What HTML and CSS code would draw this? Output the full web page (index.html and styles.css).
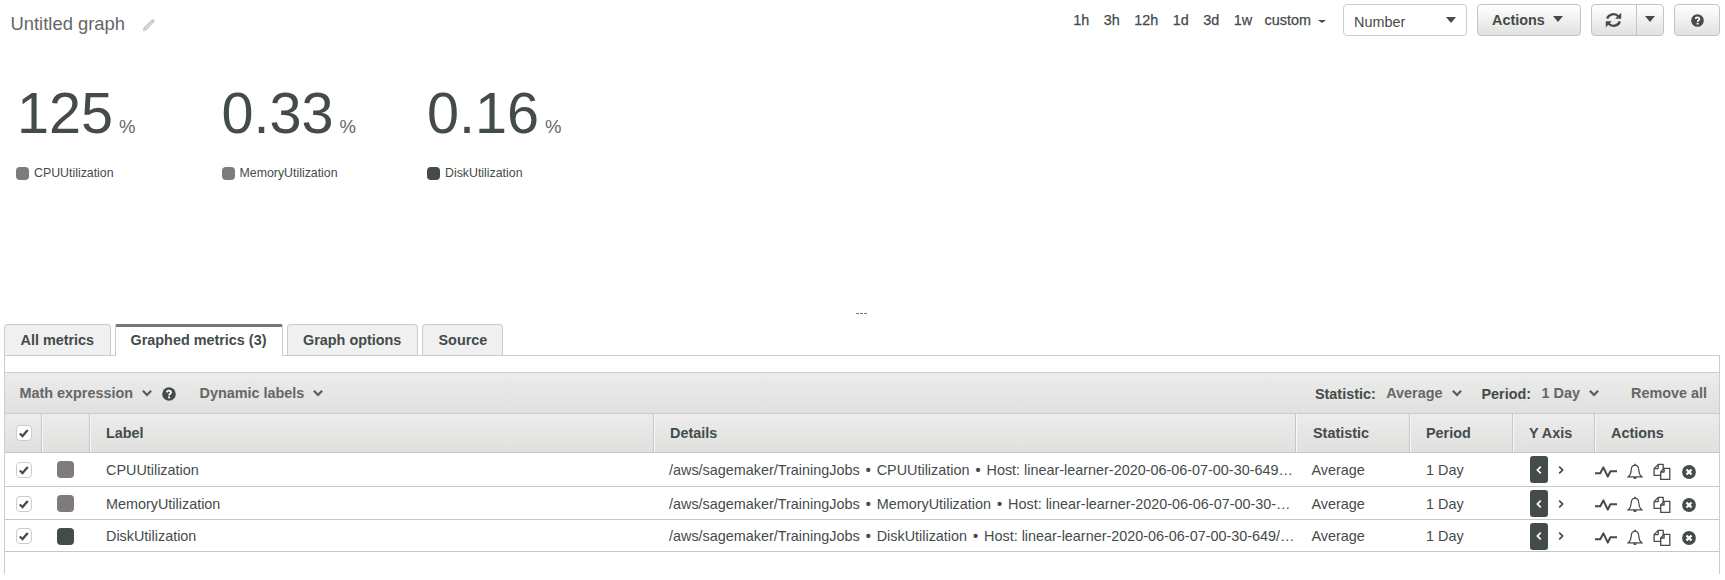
FILE: index.html
```html
<!DOCTYPE html>
<html lang="en">
<head>
<meta charset="utf-8">
<title>Untitled graph</title>
<link rel="stylesheet" href="styles.css">
</head>
<body>
<svg class="defs" aria-hidden="true">
  <symbol id="check" viewBox="0 0 16 16"><path d="M3.2 8.6 6.3 11.5 12.3 4.6" fill="none" stroke="#444b4b" stroke-width="2.6"/></symbol>
  <symbol id="chev" viewBox="0 0 10 8"><path d="M.9 1.8 5 5.9 9.1 1.8" fill="none" stroke="#545b5b" stroke-width="2.1"/></symbol>
  <symbol id="left" viewBox="0 0 6 8"><path d="M4.8.6 1.4 4 4.8 7.4" fill="none" stroke="currentColor" stroke-width="1.7"/></symbol>
  <symbol id="right" viewBox="0 0 6 8"><path d="M1.2.6 4.6 4 1.2 7.4" fill="none" stroke="currentColor" stroke-width="1.7"/></symbol>
  <symbol id="help" viewBox="0 0 14 14"><circle cx="7" cy="7" r="6.8" fill="#444b4b"/><path d="M4.9 5.4C5 3.1 9.2 3.2 9.1 5.5 9 6.8 7.1 6.8 7.1 8.4" fill="none" stroke="#fff" stroke-width="1.8"/><path d="M6.1 9.5h2v1.8h-2z" fill="#fff"/></symbol>
  <symbol id="pulse" viewBox="0 0 22 14"><path d="M0 8.3h5.2L8.4 2.4l4.4 9.2 2.6-5.3H22" fill="none" stroke="#444b4b" stroke-width="2" stroke-linejoin="round"/></symbol>
  <symbol id="bell" viewBox="0 0 16 18"><path d="M8 2.2C5.3 2.4 4.3 4.4 4.2 7c-.1 3.400-.9 5.200-2.900 6.800h13.400C12.700 12.200 11.900 10.400 11.800 7 11.700 4.400 10.700 2.400 8 2.200z" fill="none" stroke="#444b4b" stroke-width="1.200"/><path d="M7.300.8h1.400v1.500H7.300zM6 14.200h4c-.2 2.400-3.800 2.400-4 0z" fill="#444b4b"/></symbol>
  <symbol id="copy" viewBox="0 0 18 18"><g fill="#fff" stroke="#444b4b" stroke-width="1.300" stroke-linejoin="round"><path d="M5.200 1.400h5v11H1.100V5.600zM5.200 1.400v4.200H1.100"/><path d="M11.100 5.400h5.700v11H7.700V9zM11.100 5.400V9H7.700"/></g></symbol>
  <symbol id="close" viewBox="0 0 14 14"><circle cx="7" cy="7" r="6.900" fill="#444b4b"/><path d="m4.500 4.500 5 5m0-5-5 5" stroke="#fff" stroke-width="2.300"/></symbol>
</svg>

<header class="topbar">
  <h1 class="title">Untitled graph</h1>
  <svg class="pencil" viewBox="0 0 14 14"><path d="M.8 13.200 1.700 9.600 9.800 1.500q1.200-1 2.300.2 1.100 1.200.1 2.300L4.200 12.200z" fill="#c9c9c9"/><path d="m3.300 10.700 6.700-6.700" stroke="#e8e8e8"/></svg>
  <nav class="ranges"><a>1h</a><a>3h</a><a>12h</a><a>1d</a><a>3d</a><a>1w</a><a>custom</a><i class="caret small"></i></nav>
  <div class="select">Number<i class="caret"></i></div>
  <div class="btn actions">Actions<i class="caret"></i></div>
  <div class="btn split"><span class="refresh"><svg viewBox="0 0 16 16"><g fill="none" stroke="#444b4b" stroke-width="2.300"><path d="M1.700 6.600A6.400 5.800 0 0 1 13 4.400"/><path d="M14.300 9.400A6.400 5.800 0 0 1 3 11.600"/></g><path d="M15.700.8v6h-6zM.3 15.200v-6h6z" fill="#444b4b"/></svg></span><span class="more"><i class="caret"></i></span></div>
  <div class="btn helpbtn"><svg><use href="#help"/></svg></div>
</header>

<section class="numbers">
  <div class="number"><p class="value">125<small>%</small></p><p class="legend"><i class="dot"></i>CPUUtilization</p></div>
  <div class="number"><p class="value">0.33<small>%</small></p><p class="legend"><i class="dot"></i>MemoryUtilization</p></div>
  <div class="number"><p class="value">0.16<small>%</small></p><p class="legend"><i class="dot dark"></i>DiskUtilization</p></div>
</section>

<div class="handle"><i></i><i></i><i></i></div>

<nav class="tabs"><a class="tab all">All metrics</a><a class="tab active">Graphed metrics (3)</a><a class="tab opts">Graph options</a><a class="tab source">Source</a></nav>

<main class="panel">
  <div class="toolbar">
    <span class="math">Math expression</span><svg class="chev"><use href="#chev"/></svg><svg class="qmark"><use href="#help"/></svg>
    <span class="dynamic">Dynamic labels</span><svg class="chev"><use href="#chev"/></svg>
    <b class="stat">Statistic:</b><span class="pick">Average</span><svg class="chev raised"><use href="#chev"/></svg>
    <b class="period">Period:</b><span class="pick">1 Day</span><svg class="chev raised"><use href="#chev"/></svg>
    <span class="remove">Remove all</span>
  </div>
  <div class="row head">
    <div class="cell pickcell"><span class="box"><svg><use href="#check"/></svg></span></div><div class="cell"></div><div class="cell text">Label</div><div class="cell text">Details</div><div class="cell text stathead">Statistic</div><div class="cell text">Period</div><div class="cell text">Y Axis</div><div class="cell text">Actions</div>
  </div>
  <div class="row first">
    <div class="cell pickcell"><span class="box"><svg><use href="#check"/></svg></span></div><div class="cell color"><i class="swatch"></i></div><div class="cell text">CPUUtilization</div><div class="cell detail">/aws/sagemaker/TrainingJobs <b>•</b> CPUUtilization <b>•</b> Host: linear-learner-2020-06-06-07-00-30-649…</div><div class="cell avg">Average</div><div class="cell day">1 Day</div><div class="cell axis"><span class="on"><svg><use href="#left"/></svg></span><svg><use href="#right"/></svg></div><div class="cell icons"><svg class="pulse"><use href="#pulse"/></svg><svg class="bell"><use href="#bell"/></svg><svg class="copy"><use href="#copy"/></svg><svg class="close"><use href="#close"/></svg></div>
  </div>
  <div class="row second">
    <div class="cell pickcell"><span class="box"><svg><use href="#check"/></svg></span></div><div class="cell color"><i class="swatch"></i></div><div class="cell text">MemoryUtilization</div><div class="cell detail">/aws/sagemaker/TrainingJobs <b>•</b> MemoryUtilization <b>•</b> Host: linear-learner-2020-06-06-07-00-30-…</div><div class="cell avg">Average</div><div class="cell day">1 Day</div><div class="cell axis"><span class="on"><svg><use href="#left"/></svg></span><svg><use href="#right"/></svg></div><div class="cell icons"><svg class="pulse"><use href="#pulse"/></svg><svg class="bell"><use href="#bell"/></svg><svg class="copy"><use href="#copy"/></svg><svg class="close"><use href="#close"/></svg></div>
  </div>
  <div class="row third">
    <div class="cell pickcell"><span class="box"><svg><use href="#check"/></svg></span></div><div class="cell color"><i class="swatch dark"></i></div><div class="cell text">DiskUtilization</div><div class="cell detail">/aws/sagemaker/TrainingJobs <b>•</b> DiskUtilization <b>•</b> Host: linear-learner-2020-06-06-07-00-30-649/…</div><div class="cell avg">Average</div><div class="cell day">1 Day</div><div class="cell axis"><span class="on"><svg><use href="#left"/></svg></span><svg><use href="#right"/></svg></div><div class="cell icons"><svg class="pulse"><use href="#pulse"/></svg><svg class="bell"><use href="#bell"/></svg><svg class="copy"><use href="#copy"/></svg><svg class="close"><use href="#close"/></svg></div>
  </div>
</main>
</body>
</html>
```
FILE: styles.css
```css
* { box-sizing: border-box; }
body { margin: 0; height: 580px; overflow: hidden; background: #fff; color: #444b4b; font: 14.4px/20px "Liberation Sans", Arial, sans-serif; }
svg { display: block; flex: none; }
.defs { display: none; }
p, h1 { margin: 0; }

.topbar { display: flex; height: 80px; padding: 4px 5px 0 10.5px; align-items: flex-start; }
.title { margin-top: 9px; font-size: 18.4px; line-height: 22px; font-weight: 400; color: #666; width: 115px; white-space: nowrap; }
.pencil { width: 14px; height: 14px; margin: 14px 0 0 16.5px; }
.ranges { display: flex; margin: 6px 17px 0 auto; gap: 14.5px; align-items: center; -webkit-text-stroke: .25px #444b4b; }
.ranges a:nth-child(6) { margin-right: -2px; }
.caret { display: block; border: 5px solid transparent; border-top: 6px solid #444b4b; border-bottom: 0; }
.caret.small { border-width: 3.5px 4px 0; margin: 2px 0 0 -7.5px; }
.select { display: flex; align-items: center; justify-content: space-between; width: 124px; height: 32px; padding: 3px 10px 0 10px; border: 1.5px solid #ccc; border-radius: 4px; }
.select .caret { margin-top: -3px; }
.btn { display: flex; align-items: center; height: 32px; margin-left: 10px; border: 1.5px solid #c4c4c4; border-radius: 4px; background: linear-gradient(#fff, #e1e1df); font-weight: 700; }
.actions { width: 104px; padding: 0 17px 0 14px; justify-content: space-between; }
.actions .caret { border-width: 6px 5px 0; margin-top: -2px; }
.split { width: 73px; }
.refresh { display: flex; width: 45px; height: 30px; align-items: center; justify-content: center; border-right: 1px solid #c4c4c4; }
.refresh svg { width: 17px; height: 16px; margin-left: -1px; }
.more { display: flex; flex: 1; justify-content: center; }
.more .caret { border-width: 6px 5px 0; margin-top: -2px; }
.helpbtn { width: 46px; justify-content: center; }
.helpbtn svg { width: 13px; height: 13px; }
.helpbtn use, .qmark use { width: 100%; height: 100%; }

.numbers { display: flex; height: 229px; padding-left: 16px; }
.number { width: 205.500px; }
.value { height: 64px; padding-left: 1px; font-size: 57.600px; line-height: 66px; white-space: nowrap; }
.number .value small { margin-left: 6px; font-size: 18.500px; color: #666; }
.number + .number .value { padding-left: 0; }
.legend { display: flex; align-items: center; margin-top: 19px; font-size: 12.350px; }
.dot { width: 13px; height: 13px; margin-right: 5px; border-radius: 4px; background: #7f7a7b; }
.dark.dot, .dark.swatch { background: #444b4b; }

.handle { display: flex; gap: 1px; height: 15px; padding: 4px 0 0 856px; }
.handle i { width: 3px; height: 1px; background: #777; }

.tabs { display: flex; height: 32px; margin: 0 5px 0 4px; gap: 4px; border-bottom: 1px solid #ccc; }
.tab { height: 31px; padding: 5px 0 0 15.5px; border: 1px solid #ccc; border-bottom: 0; border-radius: 4px 4px 0 0; background: #f0f0f0; font-weight: 700; }
.all { width: 107px; }
.active { position: relative; width: 168px; height: 32px; padding-top: 3px; padding-left: 14.5px; border-top: 3px solid #777; border-radius: 2px 2px 0 0; background: #fff; }
.opts { width: 131px; padding-left: 15px; }
.source { width: 81px; }

.panel { width: 1716px; height: 218px; margin-left: 4px; padding-top: 16px; border: solid #ccc; border-width: 0 1px; }
.toolbar { display: flex; align-items: center; height: 41px; padding: 0 12px 0 14.5px; border-top: 1px solid #ccc; background: linear-gradient(#ececec, #e0e0de); }
.toolbar span { font-weight: 700; color: #666; white-space: nowrap; }
.chev { width: 10px; height: 8px; margin-left: 9px; }
.qmark { width: 14px; height: 14px; margin: 1px 24px 0 9.5px; }
.stat { margin-left: auto; }
.period { margin-left: 20px; }
.toolbar b { margin-top: 2px; }
.toolbar .pick { margin: -1px 0 0 10.5px; }
.raised { margin-top: -1px; }
.toolbar .remove { margin-left: 32px; }
.row { display: grid; grid-template-columns: 37px 48px 564px 642px 114px 103px 82px 1fr; border-bottom: 1px solid #c8c8c8; }
.head { height: 40px; border-top: 1px solid #ccc; background: linear-gradient(#ececec, #e0e0de); font-weight: 700; }
.head .cell { border-right: 1px solid #c6c6c6; box-shadow: 1px 0 #fafafa; }
.head .cell:last-child { border-right: 0; box-shadow: none; }
.cell { display: flex; align-items: center; white-space: nowrap; min-width: 0; }
.text { padding-left: 16px; }
.head .stathead { padding-left: 17px; }
.first { height: 34px; }
.second { height: 33px; }
.third { height: 32px; }
.second .cell, .third .cell { padding-top: 1px; }
.pickcell { padding-left: 10.5px; }
.box { width: 16px; height: 16px; border: 1px solid #ccc; border-radius: 4px; background: #fff; }
.box svg { width: 14px; height: 14px; }
.swatch { width: 17px; height: 17px; margin-left: 15px; border-radius: 4px; background: #7f7a7b; }
.detail { display: block; padding-left: 15px; align-self: center; }
.detail b { margin: 0 2px; font-size: 14.4px; }
.avg { padding-left: 15.5px; }
.day { padding-left: 16px; }
.axis { padding-left: 17px; }
.on { display: flex; width: 18px; height: 27px; margin-right: 10px; align-items: center; justify-content: center; border-radius: 3px; background: #444b4b; color: #fff; }
.axis svg { width: 6px; height: 8px; }
.row .icons { padding-top: 4px; }
.pulse { width: 22px; height: 14px; }
.bell { width: 16px; height: 18px; margin-left: 10px; }
.copy { width: 18px; height: 18px; margin-left: 10px; }
.close { width: 14px; height: 14px; margin-left: 11px; }
```
